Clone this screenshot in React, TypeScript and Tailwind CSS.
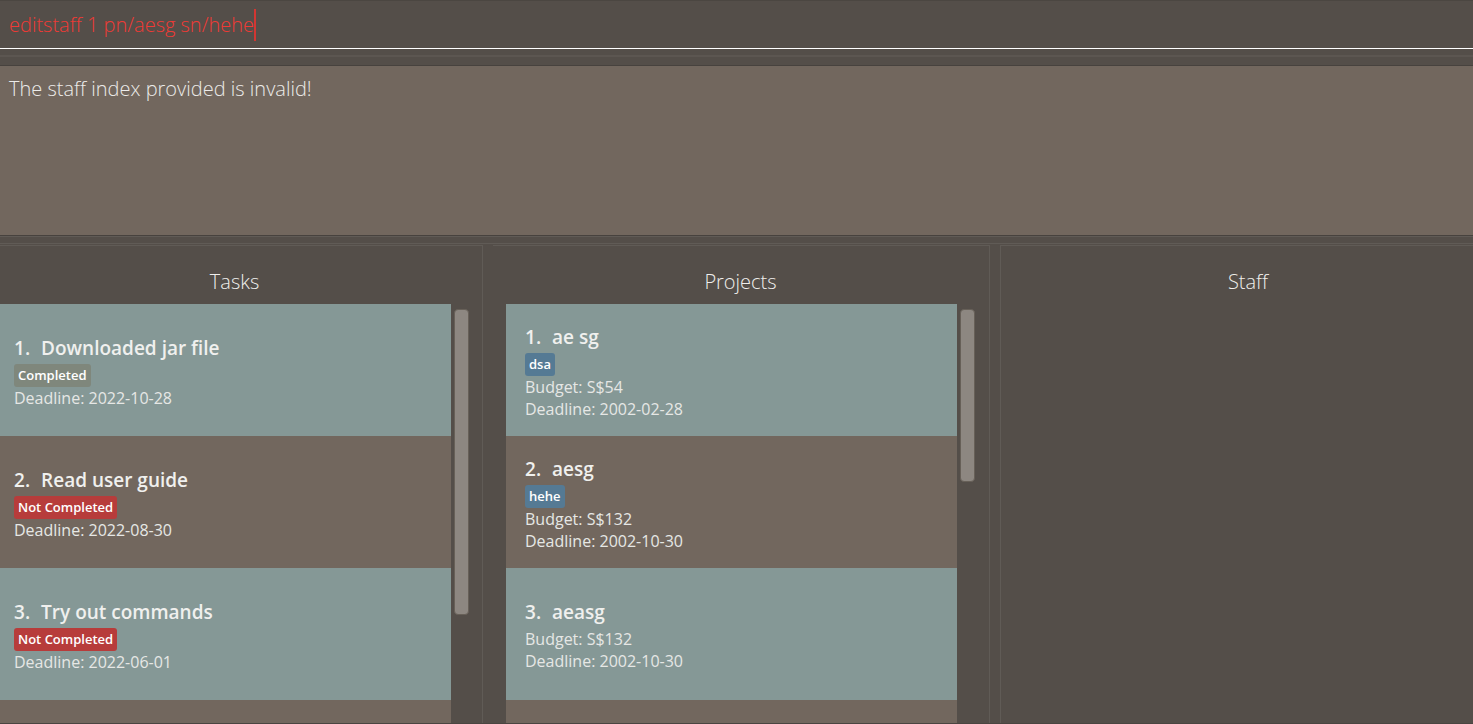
import { useState, type ReactNode } from "react";
import clsx from "clsx";

type Tag = { label: string; tone: "done" | "pending" | "info" };
type Item = { title: string; tag?: Tag; details: string[] };

const tasks: Item[] = [
  { title: "Downloaded jar file", tag: { label: "Completed", tone: "done" }, details: ["Deadline: 2022-10-28"] },
  { title: "Read user guide", tag: { label: "Not Completed", tone: "pending" }, details: ["Deadline: 2022-08-30"] },
  { title: "Try out commands", tag: { label: "Not Completed", tone: "pending" }, details: ["Deadline: 2022-06-01"] },
];

const projects: Item[] = [
  { title: "ae sg", tag: { label: "dsa", tone: "info" }, details: ["Budget: S$54", "Deadline: 2002-02-28"] },
  { title: "aesg", tag: { label: "hehe", tone: "info" }, details: ["Budget: S$132", "Deadline: 2002-10-30"] },
  { title: "aeasg", details: ["Budget: S$132", "Deadline: 2002-10-30"] },
];

const tones = {
  done: "bg-[#7f877c]",
  pending: "bg-[#b73c3b]",
  info: "bg-[#557a94]",
};

function Card({ item, index, padding }: { item: Item; index: number; padding: string }) {
  return (
    <li
      className={clsx(
        "flex h-[132px] shrink-0 flex-col items-start justify-center pt-px text-[#f0f0ee]",
        padding,
        index % 2 === 0 ? "bg-[#859896]" : "bg-[#72675e]",
      )}
    >
      <h3 className="flex gap-[11px] text-[19px] leading-[31px] font-semibold">
        <span>{index + 1}.</span>
        <span>{item.title}</span>
      </h3>
      {item.tag && (
        <span className={clsx("rounded-[3px] px-1 text-[13px] leading-[23px] font-semibold text-white", tones[item.tag.tone])}>
          {item.tag.label}
        </span>
      )}
      {item.details.map((line) => (
        <p key={line} className="text-base leading-[22px] text-[#e6e7e5]">
          {line}
        </p>
      ))}
    </li>
  );
}

function List({ items, padding, thumb }: { items: Item[]; padding: string; thumb: string }) {
  return (
    <div className="flex min-h-0 flex-1">
      <ul className="flex min-w-0 flex-1 flex-col overflow-hidden">
        {items.map((item, i) => (
          <Card key={item.title} item={item} index={i} padding={padding} />
        ))}
        <li aria-hidden="true" className="flex-1 bg-[#72675e]" />
      </ul>
      <div className="w-[18px] shrink-0 pt-[5px] pl-[3px]">
        <div className={clsx("rounded-[4px] border border-[#676058] bg-[#8d8781]", thumb)} />
      </div>
    </div>
  );
}

function Panel({ title, className, children }: { title: string; className: string; children?: ReactNode }) {
  return (
    <section className={clsx("flex min-h-0 flex-col border-t border-[#605b56]", className)}>
      <h2 className="pt-[21px] pb-[7px] text-center text-xl leading-[30px] font-light text-[#f0eeec]">{title}</h2>
      {children}
    </section>
  );
}

export default function App() {
  const [command, setCommand] = useState("editstaff 1 pn/aesg sn/hehe");
  return (
    <main className="flex h-screen flex-col overflow-hidden border-b border-[#4a4541] bg-[#544e49] font-['Open_Sans','Noto_Sans',sans-serif]">
      <form
        onSubmit={(e) => e.preventDefault()}
        className="flex h-[49px] shrink-0 items-center border-t border-b border-t-[#4b4641] border-b-white px-[9px]"
      >
        <input
          aria-label="Command"
          value={command}
          onChange={(e) => setCommand(e.target.value)}
          className="field-sizing-content max-w-full bg-transparent text-xl leading-[30px] font-light text-[#f03a35] caret-transparent outline-none"
        />
        <span aria-hidden="true" className="h-8 w-[2px] bg-[#d23632]" />
      </form>
      <div className="mt-[6px] h-[10px] shrink-0 border-t-2 border-[#5c5651]" />
      <output className="block h-[171px] shrink-0 border-t border-b border-[#47423e] bg-[#72675e] px-[9px] pt-2 text-xl leading-[30px] font-light text-[#ecebe9]">
        The staff index provided is invalid!
      </output>
      <div className="mb-px h-2 shrink-0 border-t border-b border-[#605b56]" />
      <div className="grid min-h-0 flex-1 grid-cols-[483fr_497fr_473fr] grid-rows-[minmax(0,1fr)] gap-x-[10px]">
        <Panel title="Tasks" className="border-r pr-[13px]">
          <List items={tasks} padding="px-[14px]" thumb="h-[306px]" />
        </Panel>
        <Panel title="Projects" className="border-r pr-[14px] pl-[13px]">
          <List items={projects} padding="px-[19px]" thumb="h-[173px]" />
        </Panel>
        <Panel title="Staff" className="border-l pl-[22px]" />
      </div>
    </main>
  );
}
